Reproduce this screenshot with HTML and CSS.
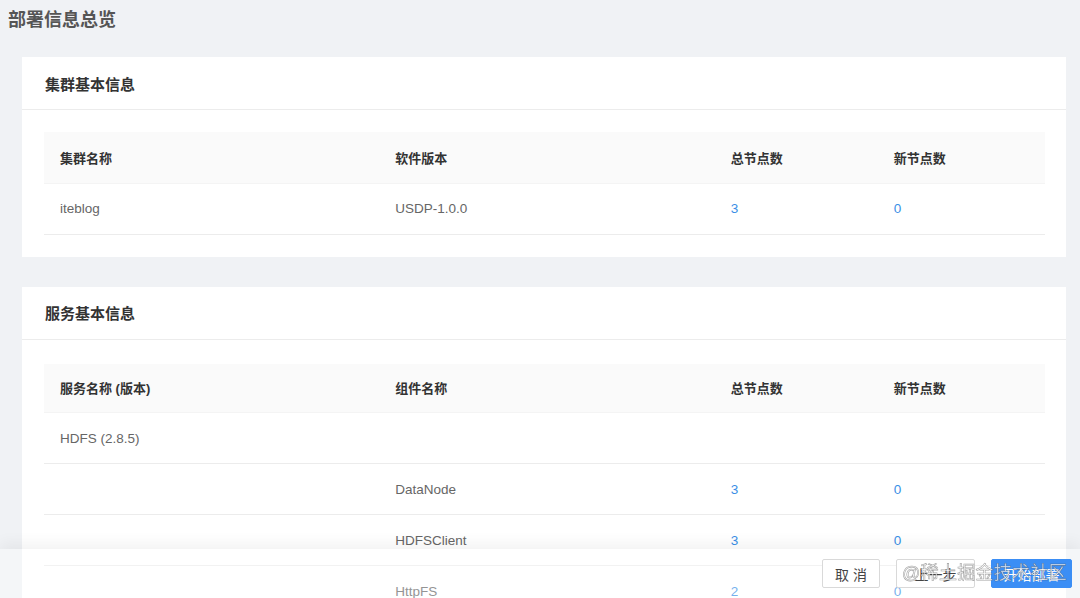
FILE: index.html
```html
<!DOCTYPE html>
<html lang="zh">
<head>
<meta charset="utf-8">
<title>部署信息总览</title>
<link rel="stylesheet" href="styles.css">
</head>
<body>
<div class="page">
  <h1 class="page-title">部署信息总览</h1>

  <section class="card">
    <div class="card-head">集群基本信息</div>
    <div class="card-body">
      <table class="tbl">
        <colgroup><col class="c1"><col class="c2"><col class="c3"><col class="c4"></colgroup>
        <thead>
          <tr><th>集群名称</th><th>软件版本</th><th>总节点数</th><th>新节点数</th></tr>
        </thead>
        <tbody>
          <tr><td>iteblog</td><td>USDP-1.0.0</td><td class="num">3</td><td class="num">0</td></tr>
        </tbody>
      </table>
    </div>
  </section>

  <section class="card">
    <div class="card-head">服务基本信息</div>
    <div class="card-body card-body-svc">
      <table class="tbl tbl-svc">
        <colgroup><col class="c1"><col class="c2"><col class="c3"><col class="c4"></colgroup>
        <thead>
          <tr><th>服务名称 (版本)</th><th>组件名称</th><th>总节点数</th><th>新节点数</th></tr>
        </thead>
        <tbody>
          <tr><td>HDFS (2.8.5)</td><td></td><td></td><td></td></tr>
          <tr><td></td><td>DataNode</td><td class="num">3</td><td class="num">0</td></tr>
          <tr><td></td><td>HDFSClient</td><td class="num">3</td><td class="num">0</td></tr>
          <tr><td></td><td>HttpFS</td><td class="num">2</td><td class="num">0</td></tr>
          <tr><td></td><td>JournalNode</td><td class="num">3</td><td class="num">0</td></tr>
        </tbody>
      </table>
    </div>
  </section>
</div>

<footer class="footer">
  <button class="btn btn-cancel">取 消</button>
  <button class="btn btn-prev">上一步</button>
  <button class="btn btn-primary">开始部署</button>
  <span class="watermark">@稀土掘金技术社区</span>
</footer>
</body>
</html>
```

FILE: styles.css
```css
* { box-sizing: border-box; }

html, body {
  margin: 0;
  padding: 0;
  background: #f0f2f5;
  font-family: "Liberation Sans", "Noto Sans CJK SC", sans-serif;
  color: #666;
}

.page {
  padding: 0 14px 80px 22px;
}

.page-title {
  margin: 0 0 0 -14px;
  padding-top: 7px;
  height: 57px;
  font-size: 18px;
  line-height: 26px;
  font-weight: 700;
  color: #555;
}

.card {
  background: #fff;
  margin-bottom: 30px;
}

.card-head {
  height: 53px;
  padding: 0 23px;
  display: flex;
  align-items: center;
  font-size: 15px;
  font-weight: 700;
  color: #333;
  border-bottom: 1px solid #ececec;
}

.card-body {
  padding: 22px 21px 22px 22px;
}

.card-body-svc {
  padding-top: 24px;
}

.tbl {
  width: 100%;
  border-collapse: collapse;
  table-layout: fixed;
  font-size: 13.5px;
}

.c1 { width: 33.5%; }
.c2 { width: 33.5%; }
.c3 { width: 16.3%; }
.c4 { width: 16.7%; }

.tbl th {
  height: 51px;
  padding: 0 16px;
  text-align: left;
  background: #fafafa;
  color: #333;
  font-weight: 700;
  font-size: 13px;
  border-bottom: 1px solid #f4f4f4;
}

.tbl-svc th {
  height: 49px;
}

.tbl td {
  height: 51px;
  padding: 0 16px;
  color: #666;
  border-bottom: 1px solid #ececec;
}

.tbl td.num {
  color: #3b8fe6;
}

.footer {
  position: fixed;
  left: 0;
  right: 0;
  bottom: 0;
  height: 49px;
  display: flex;
  align-items: center;
  justify-content: flex-end;
  gap: 16px;
  padding: 0 8px 0 0;
  background: rgba(255, 255, 255, 0.3);
  box-shadow: 0 -6px 14px rgba(0, 0, 0, 0.05);
}

.btn {
  height: 29px;
  padding: 0;
  font-family: "Liberation Sans", "Noto Sans CJK SC", sans-serif;
  font-size: 14px;
  color: #444;
  background: #fff;
  border: 1px solid #d9d9d9;
  border-radius: 2px;
}

.btn-cancel { width: 58px; }
.btn-prev { width: 79px; }

.btn-primary {
  width: 81px;
  background: #3b8ef5;
  border-color: #3b8ef5;
  color: #fff;
}

.watermark {
  position: absolute;
  right: 13px;
  top: 9px;
  font-size: 18px;
  color: rgba(255, 255, 255, 0.75);
  -webkit-text-stroke: 0.6px rgba(70, 70, 70, 0.5);
  pointer-events: none;
  letter-spacing: 0.3px;
}
```
